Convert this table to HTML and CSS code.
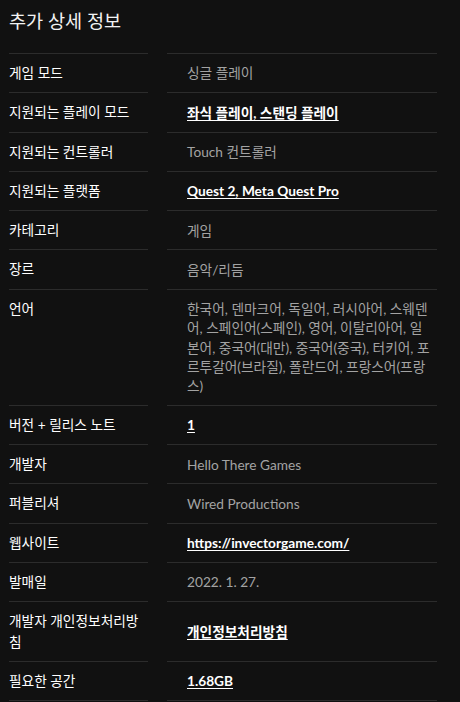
FILE: index.html
```html
<!DOCTYPE html>
<html lang="ko">
<head>
<meta charset="utf-8">
<link rel="stylesheet" href="styles.css">
</head>
<body>
<section class="details">
  <h2 class="title">추가 상세 정보</h2>
  <div class="table">
    <div class="row"><div class="label">게임 모드</div><div class="value">싱글 플레이</div></div>
    <div class="row"><div class="label">지원되는 플레이 모드</div><div class="value"><a class="link" href="#">좌식 플레이, 스탠딩 플레이</a></div></div>
    <div class="row"><div class="label">지원되는 컨트롤러</div><div class="value">Touch 컨트롤러</div></div>
    <div class="row"><div class="label">지원되는 플랫폼</div><div class="value"><a class="link" href="#">Quest 2, Meta Quest Pro</a></div></div>
    <div class="row"><div class="label">카테고리</div><div class="value">게임</div></div>
    <div class="row"><div class="label">장르</div><div class="value">음악/리듬</div></div>
    <div class="row"><div class="label">언어</div><div class="value"><span class="lines">한국어, 덴마크어, 독일어, 러시아어, 스웨덴<br>어, 스페인어(스페인), 영어, 이탈리아어, 일<br>본어, 중국어(대만), 중국어(중국), 터키어, 포<br>르투갈어(브라질), 폴란드어, 프랑스어(프랑<br>스)</span></div></div>
    <div class="row"><div class="label">버전 + 릴리스 노트</div><div class="value"><a class="link" href="#">1</a></div></div>
    <div class="row"><div class="label">개발자</div><div class="value">Hello There Games</div></div>
    <div class="row"><div class="label">퍼블리셔</div><div class="value">Wired Productions</div></div>
    <div class="row"><div class="label">웹사이트</div><div class="value"><a class="link" href="#">https://invectorgame.com/</a></div></div>
    <div class="row"><div class="label">발매일</div><div class="value">2022. 1. 27.</div></div>
    <div class="row"><div class="label">개발자 개인정보처리방침</div><div class="value"><a class="link" href="#">개인정보처리방침</a></div></div>
    <div class="row"><div class="label">필요한 공간</div><div class="value"><a class="link" href="#">1.68GB</a></div></div>
  </div>
</section>
</body>
</html>
```
FILE: styles.css
```css
html, body {
  margin: 0;
  padding: 0;
  background: #111111;
}
body {
  font-family: Lato, "Noto Sans CJK KR", sans-serif;
  color: #ffffff;
}
.details {
  width: 428px;
  padding: 0 9px;
}
.title {
  margin: 0 0 18px 0;
  padding-top: 8px;
  font-size: 18.6px;
  font-weight: 400;
  line-height: 27px;
  color: #f2f2f2;
}
.row {
  display: grid;
  grid-template-columns: 139px 270px;
  column-gap: 19px;
}
.label, .value {
  border-top: 1px solid #2c2c2c;
  padding: 9px 0;
  font-size: 13.7px;
}
.row:last-child .label, .row:last-child .value {
  border-bottom: 1px solid #2c2c2c;
}
.label {
  line-height: 20.3px;
  color: #ffffff;
}
.value {
  display: flex;
  align-items: center;
  padding-left: 20px;
  line-height: 19.4px;
  color: #a3a3a3;
}
.lines {
  white-space: nowrap;
}
.link {
  color: #ffffff;
  font-weight: 700;
  text-decoration: underline;
  text-decoration-thickness: 1px;
  text-underline-offset: 2px;
}
```
